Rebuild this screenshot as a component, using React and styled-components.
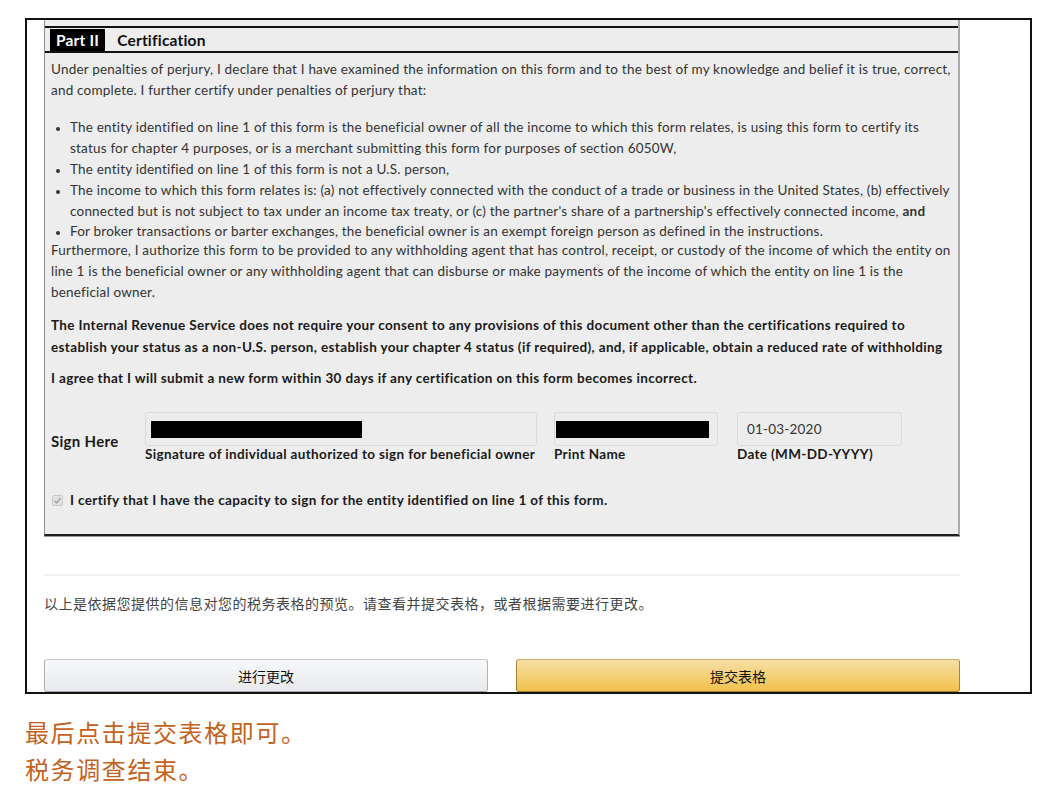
import React from "react";
import styled, { createGlobalStyle } from "styled-components";

const Global = createGlobalStyle`
  html, body { margin: 0; padding: 0; background: #fff; }
  body { font-family: Lato, "Noto Sans CJK SC", sans-serif; color: #333; }
`;

const Page = styled.div`
  padding: 18px 0 0 25px;
  width: 1062px;
  box-sizing: border-box;
`;

const Frame = styled.div`
  width: 1007px;
  height: 676px;
  box-sizing: border-box;
  border: 2px solid #111;
  overflow: hidden;
  padding-left: 17px;
`;

const Column = styled.div`
  width: 916px;
  display: flex;
  flex-direction: column;
`;

const Panel = styled.section`
  background: #ededed;
  border-left: 1px solid #8f8f8f;
  border-right: 2px solid #a9a9a9;
  border-bottom: 2px solid #1e1e1e;
  box-shadow: 0 1px 0 #9a9a9a;
  padding-top: 6px;
  font-family: Lato, sans-serif;
  font-size: 13.5px;
  letter-spacing: 0.2px;
  color: #333;
`;

const Rule = styled.div`
  height: 2px;
  background: #111;
`;

const HeaderRow = styled.div`
  display: flex;
  align-items: stretch;
  height: 23px;
  gap: 12px;
  padding-left: 5px;
`;

const PartTag = styled.span`
  background: #000;
  color: #fff;
  font-weight: 700;
  font-size: 15.5px;
  display: flex;
  align-items: center;
  padding: 0 6px;
  margin-top: 1px;
`;

const PartTitle = styled.span`
  color: #111;
  font-weight: 700;
  font-size: 15.5px;
  display: flex;
  align-items: center;
`;

const Body = styled.div`
  padding: 6px 2px 26px 6px;
`;

const Para = styled.p`
  margin: ${(p) => p.$mt || 0}px 0 0 0;
  line-height: ${(p) => p.$lh || 21}px;
  font-weight: ${(p) => (p.$bold ? 700 : 400)};
  letter-spacing: ${(p) => (p.$bold ? 0.35 : 0.2)}px;
  color: ${(p) => (p.$bold ? "#1a1a1a" : "#333")};
  padding-right: ${(p) => (p.$bold ? 6 : 0)}px;
`;

const List = styled.ul`
  margin: 16px 0 0 0;
  padding: 0 0 0 19px;
  line-height: 21px;
`;

const Item = styled.li`
  line-height: ${(p) => p.$lh || 21}px;
  &::marker { font-size: 11px; }
`;

const SignRow = styled.div`
  display: flex;
  align-items: flex-start;
  margin-top: 23px;
`;

const SignLabel = styled.div`
  width: 94px;
  font-size: 15px;
  font-weight: 700;
  letter-spacing: 0.3px;
  color: #1a1a1a;
  padding-top: 20px;
`;

const FieldGroup = styled.div`
  display: flex;
  flex-direction: column;
  width: ${(p) => p.$w}px;
  margin-right: ${(p) => p.$mr || 0}px;
`;

const Field = styled.div`
  height: 34px;
  box-sizing: border-box;
  border: 1px solid #dadada;
  border-radius: 3px;
  background: #ececec;
  display: flex;
  align-items: center;
  padding-left: ${(p) => p.$pl || 5}px;
  color: #333;
  font-size: 13.5px;
`;

const Redact = styled.div`
  height: 17px;
  width: ${(p) => p.$w}px;
  background: #000;
`;

const FieldLabel = styled.div`
  font-size: 13.5px;
  font-weight: 700;
  letter-spacing: 0.35px;
  color: #1a1a1a;
  line-height: 16px;
  white-space: nowrap;
`;

const CheckRow = styled.div`
  display: flex;
  align-items: center;
  gap: 7px;
  margin-top: 30px;
  padding-left: 1px;
  font-weight: 700;
  letter-spacing: 0.35px;
  color: #1a1a1a;
  line-height: 16px;
`;

const CheckBox = styled.span`
  width: 9px;
  height: 9px;
  border: 1px solid #c9c9c9;
  border-radius: 2px;
  background: #e2e2e2;
  display: flex;
  align-items: center;
  justify-content: center;
`;

const Divider = styled.div`
  margin-top: 38px;
  height: 2px;
  background: #f0f0f0;
`;

const Notice = styled.p`
  margin: 17px 0 0 0;
  font-family: "Noto Sans CJK SC", sans-serif;
  font-size: 14px;
  letter-spacing: 0.5px;
  line-height: 20px;
  color: #444;
`;

const ButtonRow = styled.div`
  display: flex;
  gap: 28px;
  margin-top: 46px;
`;

const Button = styled.button`
  flex: 1;
  height: 33px;
  border-radius: 3px;
  font-family: "Noto Sans CJK SC", sans-serif;
  font-size: 14px;
  color: #111;
  border: 1px solid;
  border-color: ${(p) => (p.$primary ? "#c9ad6a #a88734 #9c7e31" : "#c5c8cd #adb1b8 #a2a6ac")};
  background: ${(p) =>
    p.$primary
      ? "linear-gradient(to bottom, #f7dfa5, #f0c14b)"
      : "linear-gradient(to bottom, #f7f8fa, #e7e9ec)"};
  padding: 0;
`;

const Caption = styled.div`
  margin-top: 19px;
  font-family: "Noto Sans CJK SC", sans-serif;
  font-size: 24px;
  letter-spacing: 1.6px;
  line-height: 37px;
  color: #c4621d;
`;

export default function App() {
  return (
    <>
      <Global />
      <Page>
        <Frame>
          <Column>
            <Panel>
              <Rule />
              <HeaderRow>
                <PartTag>Part II</PartTag>
                <PartTitle>Certification</PartTitle>
              </HeaderRow>
              <Rule />
              <Body>
                <Para>
                  Under penalties of perjury, I declare that I have examined the information on this form and to the best of my knowledge and belief it is true, correct, and complete. I further certify under penalties of perjury that:
                </Para>
                <List>
                  <Item>
                    The entity identified on line 1 of this form is the beneficial owner of all the income to which this form relates, is using this form to certify its status for chapter 4 purposes, or is a merchant submitting this form for purposes of section 6050W,
                  </Item>
                  <Item>The entity identified on line 1 of this form is not a U.S. person,</Item>
                  <Item>
                    The income to which this form relates is: (a) not effectively connected with the conduct of a trade or business in the United States, (b) effectively connected but is not subject to tax under an income tax treaty, or (c) the partner's share of a partnership's effectively connected income, <b>and</b>
                  </Item>
                  <Item $lh={18}>
                    For broker transactions or barter exchanges, the beneficial owner is an exempt foreign person as defined in the instructions.
                  </Item>
                </List>
                <Para>
                  Furthermore, I authorize this form to be provided to any withholding agent that has control, receipt, or custody of the income of which the entity on line 1 is the beneficial owner or any withholding agent that can disburse or make payments of the income of which the entity on line 1 is the beneficial owner.
                </Para>
                <Para $bold $mt={11} $lh={22}>
                  The Internal Revenue Service does not require your consent to any provisions of this document other than the certifications required to establish your status as a non-U.S. person, establish your chapter 4 status (if required), and, if applicable, obtain a reduced rate of withholding
                </Para>
                <Para $bold $mt={10}>
                  I agree that I will submit a new form within 30 days if any certification on this form becomes incorrect.
                </Para>
                <SignRow>
                  <SignLabel>Sign Here</SignLabel>
                  <FieldGroup $w={392} $mr={17}>
                    <Field>
                      <Redact $w={211} />
                    </Field>
                    <FieldLabel>Signature of individual authorized to sign for beneficial owner</FieldLabel>
                  </FieldGroup>
                  <FieldGroup $w={164} $mr={19}>
                    <Field $pl={1}>
                      <Redact $w={153} />
                    </Field>
                    <FieldLabel>Print Name</FieldLabel>
                  </FieldGroup>
                  <FieldGroup $w={165}>
                    <Field $pl={9}>01-03-2020</Field>
                    <FieldLabel>Date (MM-DD-YYYY)</FieldLabel>
                  </FieldGroup>
                </SignRow>
                <CheckRow>
                  <CheckBox>
                    <svg width="9" height="9" viewBox="0 0 9 9">
                      <path d="M1.5 4.8 L3.6 6.8 L7.6 2" fill="none" stroke="#a5a5a5" strokeWidth="1.6" />
                    </svg>
                  </CheckBox>
                  I certify that I have the capacity to sign for the entity identified on line 1 of this form.
                </CheckRow>
              </Body>
            </Panel>
            <Divider />
            <Notice>以上是依据您提供的信息对您的税务表格的预览。请查看并提交表格，或者根据需要进行更改。</Notice>
            <ButtonRow>
              <Button>进行更改</Button>
              <Button $primary>提交表格</Button>
            </ButtonRow>
          </Column>
        </Frame>
        <Caption>
          最后点击提交表格即可。
          <br />
          税务调查结束。
        </Caption>
      </Page>
    </>
  );
}
